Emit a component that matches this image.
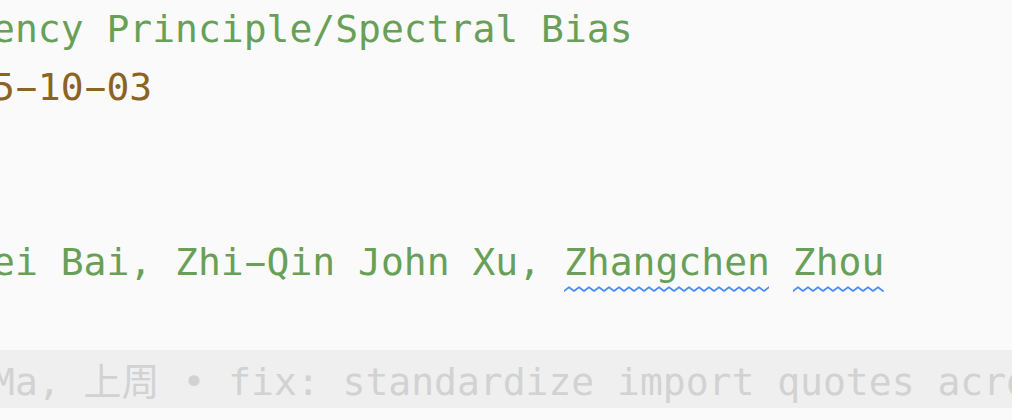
import React from "react";

const Line = ({ children, className = "" }: { children?: React.ReactNode; className?: string }) => (
  <div className={`h-[58.33px] leading-[58.33px] whitespace-pre ${className}`}>
    <div className="ml-[-8px]">{children ?? " "}</div>
  </div>
);

const Dash = () => <span className="inline-block scale-x-[1.9]">-</span>;

const Squiggle = ({ width }: { width: number }) => {
  const pts: string[] = [];
  for (let x = 0, i = 0; x <= width; x += 5, i++) {
    pts.push(`${x},${i % 2 === 0 ? 5 : 1.2}`);
  }
  return (
    <svg
      className="absolute left-0 bottom-[-8px]"
      width={width}
      height={6}
      viewBox={`0 0 ${width} 6`}
    >
      <polyline
        points={pts.join(" ")}
        fill="none"
        stroke="#4d8cf2"
        strokeWidth={1.7}
        strokeLinejoin="round"
        strokeLinecap="round"
      />
    </svg>
  );
};

const Misspelled = ({ word, width }: { word: string; width: number }) => (
  <span className="relative">
    {word}
    <Squiggle width={width} />
  </span>
);

export default function App() {
  return (
    <div className="w-[1012px] h-[420px] overflow-hidden bg-[#fafafa] font-['DejaVu_Sans_Mono','Noto_Sans_CJK_SC',monospace] text-[38px]">
      <Line className="text-[#68a058]">ency Principle/Spectral Bias</Line>
      <Line className="text-[#8c6322]">
        5<Dash />10<Dash />03
      </Line>
      <Line />
      <Line />
      <Line className="text-[#68a058]">
        ei Bai, Zhi<Dash />Qin John Xu, <Misspelled word="Zhangchen" width={205} /> <Misspelled word="Zhou" width={91} />
      </Line>
      <Line />
      <Line className="bg-[#efefef] text-[#d2d2d2]">
        Ma, <span className="font-['Noto_Sans_CJK_SC',sans-serif]">上周</span> • fix: standardize import quotes across files
      </Line>
      <Line />
    </div>
  );
}
